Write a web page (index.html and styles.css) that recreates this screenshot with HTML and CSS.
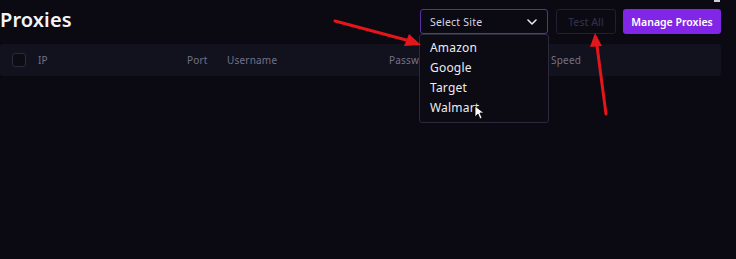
FILE: index.html
```html
<!DOCTYPE html>
<html>
<head>
<meta charset="utf-8">
<link rel="stylesheet" href="styles.css">
</head>
<body>
<div class="page">
  <div class="topbar">
    <h1 class="title">Proxies</h1>
    <div class="controls">
      <div class="select-wrap">
        <div class="select">
          <span>Select Site</span>
          <svg class="chev" width="10" height="6" viewBox="0 0 10 6"><path d="M1 1l4 4 4-4" fill="none" stroke="#e6e6ee" stroke-width="1.6" stroke-linecap="round" stroke-linejoin="round"/></svg>
        </div>
        <ul class="menu">
          <li>Amazon</li>
          <li>Google</li>
          <li>Target</li>
          <li>Walmart</li>
        </ul>
      </div>
      <button class="btn btn-ghost">Test All</button>
      <button class="btn btn-primary">Manage Proxies</button>
    </div>
  </div>
  <div class="thead">
    <span class="cb"></span>
    <span class="col col-ip">IP</span>
    <span class="col col-port">Port</span>
    <span class="col col-user">Username</span>
    <span class="col col-pass">Password</span>
    <span class="col col-speed">Speed</span>
  </div>
  <div class="winctl"></div>
  <svg class="annot" width="736" height="259" viewBox="0 0 736 259">
    <line x1="335" y1="21" x2="410" y2="41" stroke="#e3161b" stroke-width="3" stroke-linecap="round"/>
    <polygon points="421,45 404,46 409,34" fill="#e3161b"/>
    <line x1="606" y1="114" x2="597" y2="46" stroke="#e3161b" stroke-width="3" stroke-linecap="round"/>
    <polygon points="595,33 590,47 602,46" fill="#e3161b"/>
    <path d="M475 106 L475 117 L478 114 L480 119 L482 118 L480 113 L484 113 Z" fill="#fff" stroke="#000" stroke-width="0.8"/>
  </svg>
</div>
</body>
</html>
```
FILE: styles.css
```css
* { box-sizing: border-box; }
html, body { margin: 0; padding: 0; }
body {
  background: #0b0911;
  font-family: "Noto Sans", "Open Sans", sans-serif;
  color: #e8e8f0;
  width: 736px;
  height: 259px;
  overflow: hidden;
}
.page { position: relative; width: 736px; height: 259px; padding-right: 15px; }
.topbar {
  display: flex;
  justify-content: space-between;
  align-items: flex-start;
  height: 44px;
}
.title {
  margin: 6px 0 0 0;
  font-size: 20px;
  font-weight: 600;
  color: #f4f4f8;
  letter-spacing: 0.1px;
}
.controls {
  display: flex;
  margin-top: 9px;
}
.select-wrap { position: relative; margin-right: 8px; }
.select {
  width: 128px;
  height: 25px;
  border: 1px solid #5c2f9e;
  border-radius: 3px;
  background: #0b0911;
  display: flex;
  align-items: center;
  justify-content: space-between;
  padding: 0 10px 0 9px;
  font-size: 10.5px;
  letter-spacing: 0.2px;
  color: #d6d6e0;
}
.chev { display: block; }
.menu {
  position: absolute;
  left: -1px;
  top: 25px;
  width: 130px;
  margin: 0;
  padding: 3px 0 4px 0;
  list-style: none;
  background: #0c0a13;
  border: 1px solid #2b2a3a;
  border-radius: 3px;
  z-index: 5;
}
.menu li {
  height: 20px;
  line-height: 20px;
  padding-left: 10px;
  font-size: 12px;
  letter-spacing: 0.2px;
  color: #ececf2;
}
.btn {
  height: 25px;
  border-radius: 3px;
  font-family: inherit;
  font-size: 10.5px;
  font-weight: 500;
  padding: 0;
}
.btn-ghost {
  width: 60px;
  margin-right: 7px;
  background: #0b0911;
  border: 1px solid #22202f;
  color: #302e46;
}
.btn-primary {
  width: 98px;
  background: #8126e6;
  border: none;
  color: #fff;
  font-weight: 600;
}
.thead {
  position: relative;
  width: 721px;
  height: 32px;
  background: #12111e;
  border-radius: 3px;
  display: flex;
  align-items: center;
  font-size: 10px;
  letter-spacing: 0.2px;
  color: #727186;
}
.cb {
  width: 14px;
  height: 14px;
  margin-left: 12px;
  border: 1px solid #2c2b3a;
  border-radius: 3px;
  background: #0d0c15;
}
.col-ip { margin-left: 12px; width: 149px; }
.col-port { width: 40px; }
.col-user { width: 162px; }
.col-pass { width: 162px; }
.winctl {
  position: absolute;
  right: 16px;
  top: 0;
  width: 6px;
  height: 2px;
  background: #cfcfd6;
}
.annot { position: absolute; left: 0; top: 0; pointer-events: none; z-index: 10; }
```
